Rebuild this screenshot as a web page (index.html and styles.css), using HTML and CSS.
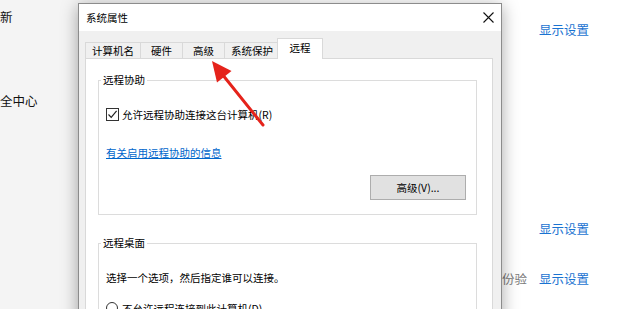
FILE: index.html
```html
<!DOCTYPE html>
<html lang="zh-CN">
<head>
  <meta charset="UTF-8" />
  <title>系统属性</title>
  <link rel="stylesheet" href="styles.css">
</head>
<body>
  <div class="screen">
    <div class="settings">
      <div class="side">
        <div class="side-item first">新</div>
        <div class="side-item second">全中心</div>
      </div>
      <div class="content">
        <div class="row row-1"><a class="link" href="#">显示设置</a></div>
        <div class="row row-2"><a class="link" href="#">显示设置</a></div>
        <div class="row row-3"><span class="muted">身份验</span><a class="link" href="#">显示设置</a></div>
      </div>
    </div>

    <div class="dialog">
      <div class="titlebar">
        <span class="title">系统属性</span>
        <svg class="close" width="11" height="11" viewBox="0 0 11 11">
          <path d="M0.5 0.5 L10.5 10.5 M10.5 0.5 L0.5 10.5" stroke="#111" stroke-width="1.1" fill="none"/>
        </svg>
      </div>
      <div class="dialog-body">
        <div class="tabs">
          <div class="tab">计算机名</div>
          <div class="tab">硬件</div>
          <div class="tab">高级</div>
          <div class="tab">系统保护</div>
          <div class="tab active">远程</div>
        </div>
        <div class="panel">
          <fieldset class="group">
            <legend>远程协助</legend>
            <div class="check-row">
              <span class="checkbox">
                <svg width="11" height="11" viewBox="0 0 11 11">
                  <path d="M1.5 5.5 L4.2 8.3 L9.6 1.8" stroke="#222" stroke-width="1.2" fill="none"/>
                </svg>
              </span>
              <span>允许远程协助连接这台计算机(R)</span>
            </div>
            <a class="info-link" href="#">有关启用远程协助的信息</a>
            <button class="btn">高级(V)...</button>
          </fieldset>

          <fieldset class="group second-group">
            <legend>远程桌面</legend>
            <div class="hint">选择一个选项，然后指定谁可以连接。</div>
            <div class="radio-row">
              <span class="radio"></span>
              <span>不允许远程连接到此计算机(D)</span>
            </div>
          </fieldset>
        </div>
      </div>
    </div>

    <svg class="arrow" width="620" height="309" viewBox="0 0 620 309">
      <line x1="263" y1="125" x2="222" y2="74" stroke="#e5231b" stroke-width="3" stroke-linecap="round"/>
      <polygon points="212,61 217,82.5 231.5,71" fill="#e5231b"/>
    </svg>
  </div>
</body>
</html>
```

FILE: styles.css
```css
body {
  margin: 0;
  font-family: "Noto Sans CJK SC", "Noto Sans", sans-serif;
}
.screen {
  position: relative;
  width: 620px;
  height: 309px;
  overflow: hidden;
  background-color: #ffffff;
}
.settings {
  display: flex;
  height: 100%;
}
.side {
  width: 300px;
  background-color: #f4f4f4;
  font-size: 12.5px;
  color: #111;
}
.side-item {
  line-height: 16px;
}
.side-item.first {
  margin-top: 9px;
}
.side-item.second {
  margin-top: 68px;
}
.content {
  flex: 1;
  font-size: 12.5px;
}
.row {
  display: flex;
  justify-content: flex-end;
  align-items: center;
  gap: 12px;
  height: 16px;
  padding-right: 31px;
}
.row-1 {
  margin-top: 21px;
}
.row-2 {
  margin-top: 183px;
}
.row-3 {
  margin-top: 34px;
}
.link {
  color: #1a73d1;
  text-decoration: none;
}
.muted {
  color: #7a7a7a;
}

.dialog {
  position: absolute;
  left: 78px;
  top: 3px;
  width: 422px;
  height: 400px;
  border: 1px solid #8c8c8c;
  background-color: #f0f0f0;
  box-shadow: 0 3px 16px rgba(0, 0, 0, 0.35);
  font-size: 10.5px;
  color: #000;
}
.titlebar {
  display: flex;
  justify-content: space-between;
  align-items: center;
  height: 27px;
  padding: 0 7px;
  background-color: #ffffff;
}
.title {
  line-height: 14px;
}
.close {
  display: block;
}
.dialog-body {
  padding: 7px 8px 0 6px;
}
.tabs {
  display: flex;
  align-items: flex-end;
  height: 20px;
}
.tab {
  box-sizing: border-box;
  min-width: 43px;
  height: 16px;
  padding: 0 6px;
  margin-right: -1px;
  border: 1px solid #d9d9d9;
  border-bottom: none;
  background-color: #f0f0f0;
  text-align: center;
  line-height: 15px;
}
.tab.active {
  position: relative;
  height: 21px;
  min-width: 46px;
  margin: 0 0 -1px -2px;
  padding-bottom: 3px;
  background-color: #ffffff;
  line-height: 18px;
}
.panel {
  height: 320px;
  padding: 14px 15px 0 12px;
  border: 1px solid #d9d9d9;
  background-color: #ffffff;
}
.group {
  display: flex;
  flex-direction: column;
  align-items: flex-start;
  margin: 0;
  padding: 0 10px 14px 7px;
  border: 1px solid #dcdcdc;
}
.group legend {
  margin-left: -5px;
  padding: 0 2px;
  line-height: 14px;
}
.second-group {
  margin-top: 21px;
}
.check-row {
  display: flex;
  align-items: center;
  gap: 3px;
  margin-top: 20px;
  height: 14px;
}
.checkbox {
  display: flex;
  align-items: center;
  justify-content: center;
  width: 11px;
  height: 11px;
  border: 1px solid #333;
}
.info-link {
  margin-top: 25px;
  line-height: 14px;
  color: #0066cc;
}
.btn {
  align-self: flex-end;
  width: 96px;
  height: 25px;
  margin-top: 15px;
  border: 1px solid #adadad;
  background-color: #e1e1e1;
  font-family: inherit;
  font-size: 10.5px;
  color: #000;
}
.hint {
  margin-top: 21px;
  line-height: 14px;
}
.radio-row {
  display: flex;
  align-items: center;
  gap: 4px;
  margin-top: 16px;
  height: 14px;
}
.radio {
  width: 10px;
  height: 10px;
  border: 1px solid #333;
  border-radius: 50%;
}
.arrow {
  position: absolute;
  left: 0;
  top: 0;
  pointer-events: none;
}
```
